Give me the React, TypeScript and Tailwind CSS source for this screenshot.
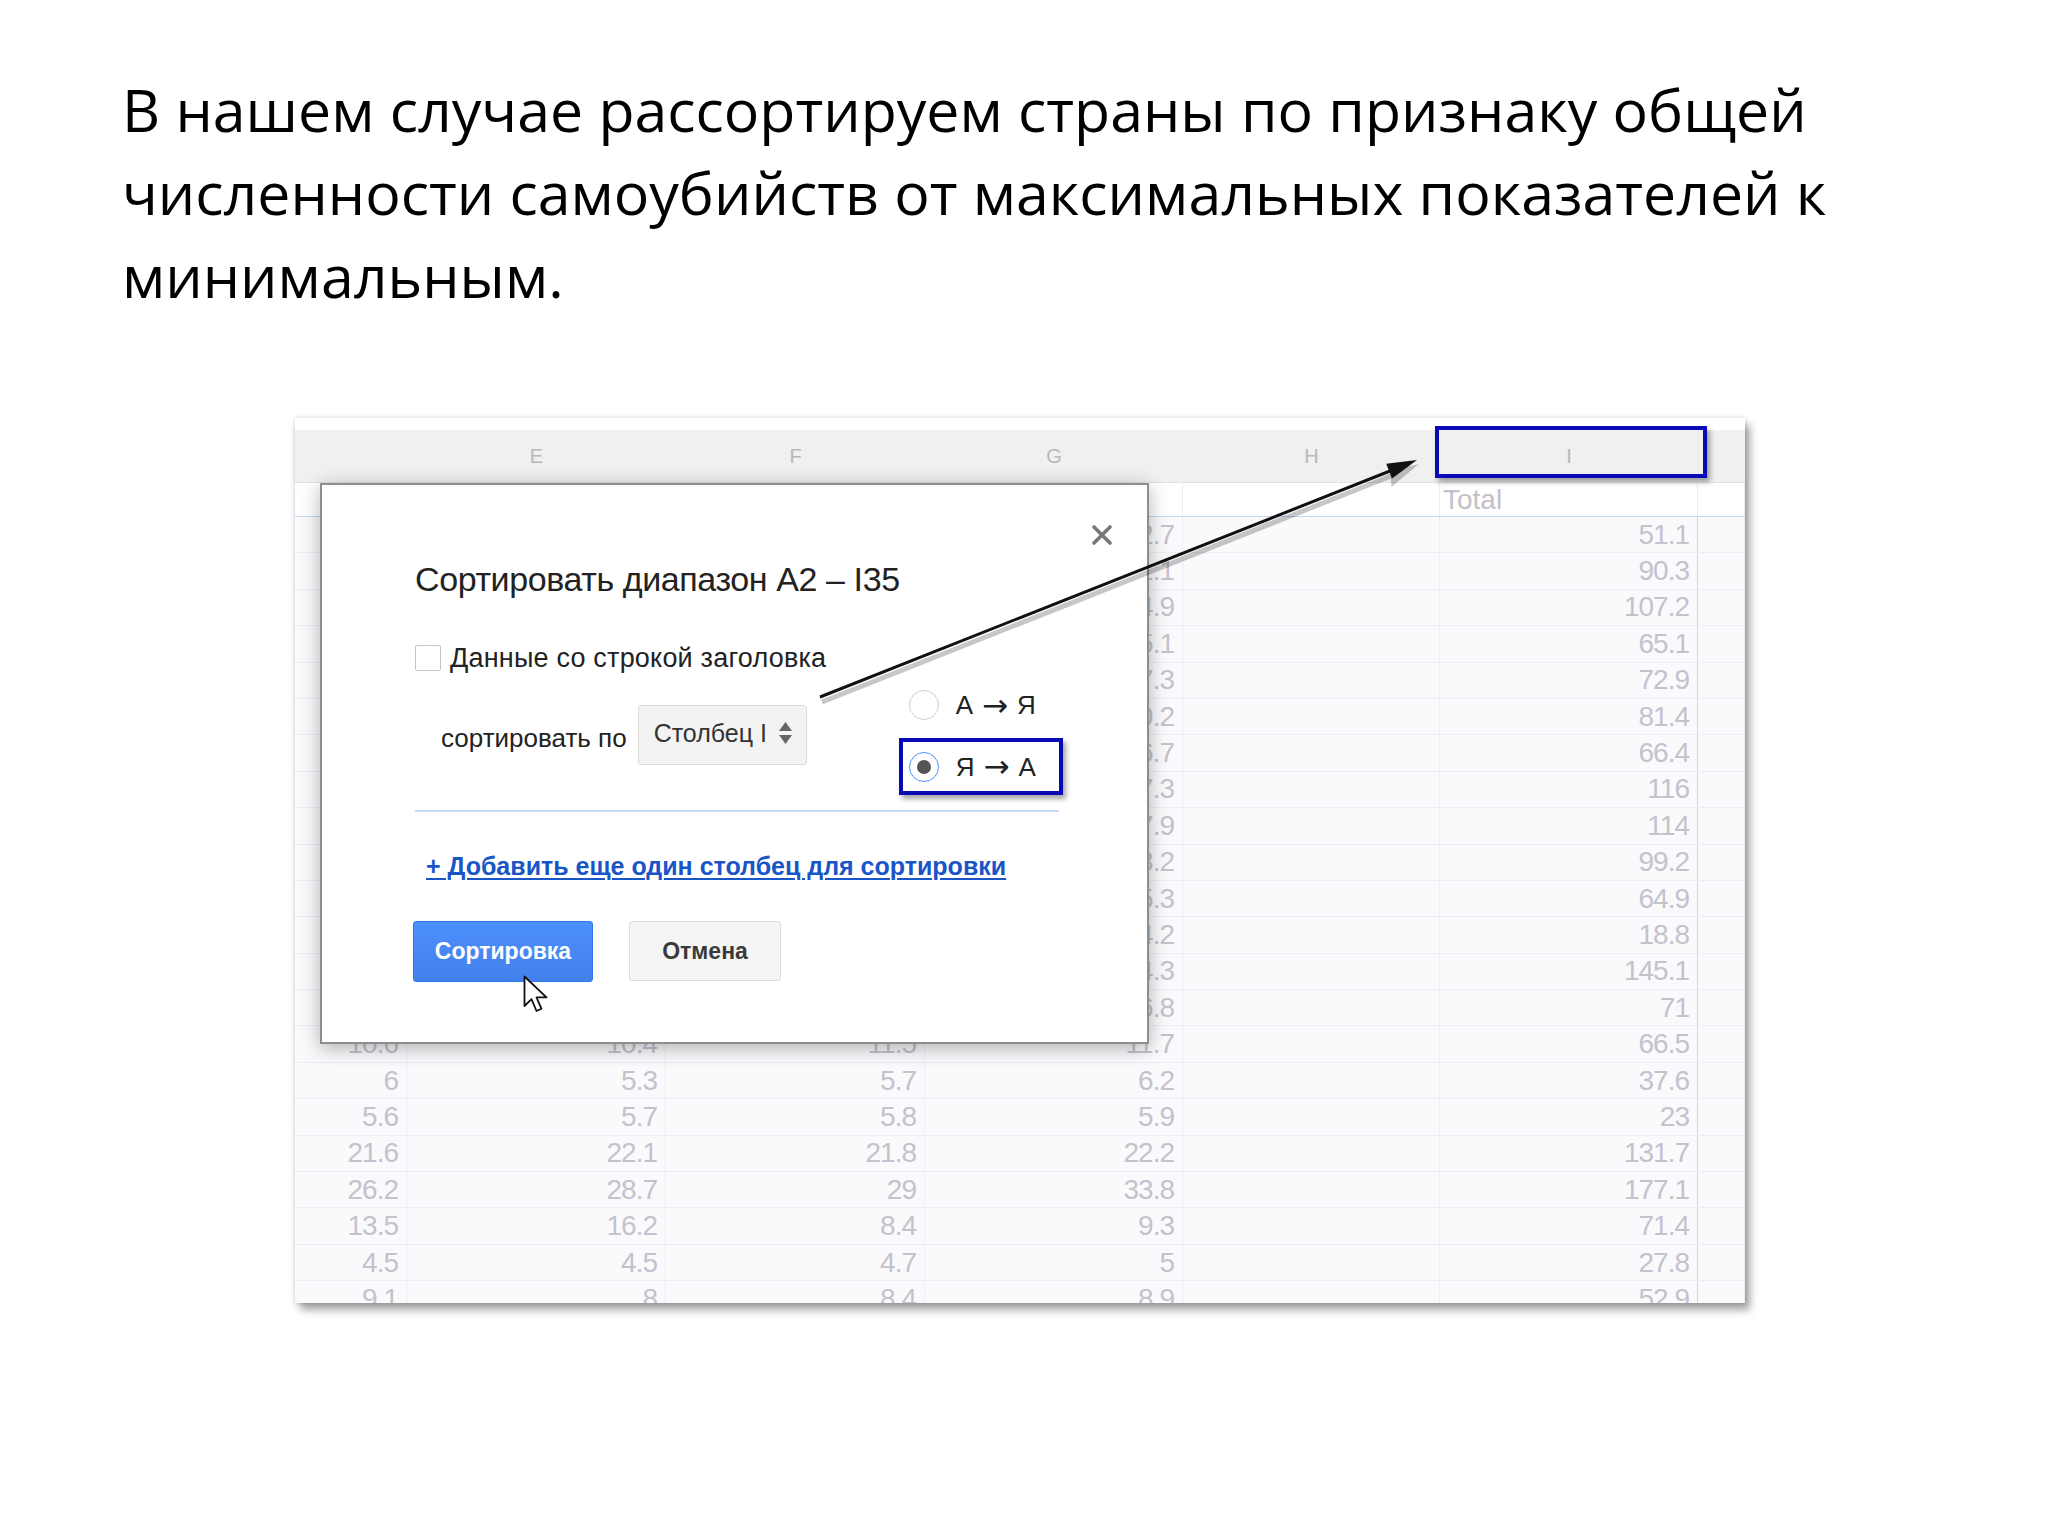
import React from "react";

const COL_W = ["w-[112px]", "w-[259px]", "w-[259px]", "w-[258px]", "w-[257px]", "w-[258px]", "w-[47px]"];
const HEAD = ["", "E", "F", "G", "H", "I", ""];

// D, E, F, G, I
const ROWS: string[][] = [
  ["8.1", "12.4", "13.2", "12.7", "51.1"],
  ["20.3", "22.5", "22.6", "21.1", "90.3"],
  ["25.1", "27.3", "27.5", "24.9", "107.2"],
  ["15.3", "17.1", "16.9", "15.1", "65.1"],
  ["16.9", "18.4", "19.9", "17.3", "72.9"],
  ["20.1", "21.4", "20.5", "19.2", "81.4"],
  ["15.5", "16.8", "17.2", "16.7", "66.4"],
  ["29.5", "29.4", "29.6", "27.3", "116"],
  ["28.3", "28.5", "28.7", "27.9", "114"],
  ["25.1", "25.3", "25.4", "23.2", "99.2"],
  ["16.2", "16.4", "16.9", "15.3", "64.9"],
  ["4.6", "5.1", "4.9", "4.2", "18.8"],
  ["36.2", "37.3", "37.3", "34.3", "145.1"],
  ["17.8", "18.1", "18.3", "16.8", "71"],
  ["10.6", "10.4", "11.5", "11.7", "66.5"],
  ["6", "5.3", "5.7", "6.2", "37.6"],
  ["5.6", "5.7", "5.8", "5.9", "23"],
  ["21.6", "22.1", "21.8", "22.2", "131.7"],
  ["26.2", "28.7", "29", "33.8", "177.1"],
  ["13.5", "16.2", "8.4", "9.3", "71.4"],
  ["4.5", "4.5", "4.7", "5", "27.8"],
  ["9.1", "8", "8.4", "8.9", "52.9"],
];

function Cell({ i, children, blue }: { i: number; children?: React.ReactNode; blue?: boolean }) {
  return (
    <div
      className={`${COL_W[i]} shrink-0 h-full flex items-center justify-end pr-[8px] border-r ${
        blue ? "border-[#c5d7f2]" : "border-[#ededf2]"
      }`}
    >
      {children}
    </div>
  );
}

function Radio({ checked }: { checked?: boolean }) {
  return checked ? (
    <div className="w-[30px] h-[30px] rounded-full border-[1.5px] border-[#4d90fe] bg-white flex items-center justify-center">
      <div className="w-[14px] h-[14px] rounded-full bg-[#555]" />
    </div>
  ) : (
    <div className="w-[30px] h-[30px] rounded-full border-[1.5px] border-[#cfcfcf] bg-white" />
  );
}

function Order({ from, to }: { from: string; to: string }) {
  return (
    <span className="flex items-center gap-[9px] text-[26px] leading-[30px]">
      <span>{from}</span>
      <span className="text-[31px] leading-none font-['DejaVu_Sans',sans-serif]">→</span>
      <span>{to}</span>
    </span>
  );
}

function SortDialog() {
  return (
    <div className="absolute left-[25px] top-[65px] w-[829px] h-[561px] bg-white border-2 border-[#8e8e8e] shadow-[0_4px_18px_rgba(0,0,0,0.3)] font-['Liberation_Sans',Arial,sans-serif] text-[#222]">
      {/* close */}
      <svg className="absolute left-[769px] top-[39px]" width="22" height="22" viewBox="0 0 22 22">
        <path d="M3 3l16 16M19 3L3 19" stroke="#777" strokeWidth="3.6" strokeLinecap="round" />
      </svg>

      <div className="pl-[93px] pt-[74px] flex flex-col">
        <div className="text-[34px] leading-[40px] tracking-[-0.4px]">Сортировать диапазон A2 – I35</div>

        <div className="mt-[44px] h-[30px] flex items-center gap-[9px]">
          <div className="w-[26px] h-[26px] border-[1.5px] border-[#c6c6c6] rounded-[2px] bg-white" />
          <span className="text-[27px] leading-[30px] tracking-[0.2px]">Данные со строкой заголовка</span>
        </div>

        <div className="mt-[17px] flex items-start">
          <div className="mt-[15px] ml-[26px] flex items-center gap-[11px]">
            <span className="text-[26px] leading-[30px] pt-[6px]">сортировать по</span>
            <div className="w-[169px] h-[60px] bg-[#f3f3f3] border border-[#dcdcdc] rounded-[3px] flex items-center gap-[11px] pl-[15px] pb-[4px]">
              <span className="text-[25px] leading-[30px] text-[#333]">Столбец I</span>
              <svg width="15" height="24" viewBox="0 0 15 24">
                <path d="M7.5 1L14 10H1z" fill="#666" />
                <path d="M7.5 23L14 14H1z" fill="#666" />
              </svg>
            </div>
          </div>

          <div className="ml-[92px] flex flex-col">
            <div className="ml-[10px] h-[30px] flex items-center gap-[17px]">
              <Radio />
              <Order from="А" to="Я" />
            </div>
            <div className="mt-[18px] w-[164px] h-[57px] border-4 border-[#0a0ab4] shadow-[3px_4px_5px_rgba(0,0,0,0.35)] flex items-center gap-[17px] pl-[6px]">
              <Radio checked />
              <Order from="Я" to="А" />
            </div>
          </div>
        </div>

        <div className="mt-[15px] w-[644px] h-[2px] bg-[#c8dbf8]" />

        <a className="mt-[40px] ml-[11px] text-[25px] leading-[29px] font-bold text-[#1a55c8] underline underline-offset-[3px] decoration-2">
          + Добавить еще один столбец для сортировки
        </a>

        <div className="mt-[40px] -ml-[2px] flex gap-[36px]">
          <div className="w-[180px] h-[61px] rounded-[3px] border border-[#3079ed] bg-gradient-to-b from-[#4d90fe] to-[#4280ea] flex items-center justify-center text-white text-[23px] font-bold">
            Сортировка
          </div>
          <div className="w-[152px] h-[60px] rounded-[3px] border border-[#dcdcdc] bg-[#f5f5f5] flex items-center justify-center text-[#3a3a3a] text-[23px] font-bold">
            Отмена
          </div>
        </div>
      </div>

      {/* mouse pointer */}
      <svg className="absolute left-[201px] top-[490px]" width="27" height="41" viewBox="0 0 27 41">
        <path d="M1.5 1.5V31l7-6.8 5 11.8 5-2.2-5-11.4h10z" fill="#fff" stroke="#111" strokeWidth="1.8" strokeLinejoin="round" />
      </svg>
    </div>
  );
}

function Sheet() {
  return (
    <div className="relative ml-[295px] mt-[101px] w-[1450px] h-[885px] bg-white overflow-hidden shadow-[0_0_5px_rgba(0,0,0,0.18),5px_7px_8px_rgba(0,0,0,0.35)] font-['Liberation_Sans',Arial,sans-serif]">
      <div className="h-[12px] bg-white" />
      {/* column header */}
      <div className="h-[53px] flex bg-[#f0f0f0] border-b border-[#e2e2e2]">
        {HEAD.map((h, i) => (
          <div key={i} className={`${COL_W[i]} shrink-0 flex items-center justify-center text-[20px] text-[#b8b8b8]`}>
            {h}
          </div>
        ))}
      </div>
      {/* header row of data */}
      <div className="h-[34px] flex bg-white border-b border-[#c5d7f2] text-[28px] text-[#c2c0ca]">
        <Cell i={0} />
        <Cell i={1} />
        <Cell i={2} />
        <Cell i={3} />
        <Cell i={4} />
        <div className="w-[258px] shrink-0 h-full flex items-center pl-[3px] border-r border-[#ededf2]">Total</div>
        <Cell i={6} />
      </div>
      {ROWS.map((r, k) => (
        <div key={k} className="h-[36.4px] flex bg-[#fafafd] border-b border-[#ececf1] text-[28px] tracking-[-1px] text-[#c4c2cc]">
          <Cell i={0}>{r[0]}</Cell>
          <Cell i={1}>{r[1]}</Cell>
          <Cell i={2}>{r[2]}</Cell>
          <Cell i={3}>{r[3]}</Cell>
          <Cell i={4} />
          <Cell i={5} blue>
            {r[4]}
          </Cell>
          <Cell i={6} />
        </div>
      ))}

      <SortDialog />

      {/* highlight on column I header */}
      <div className="absolute left-[1140px] top-[8px] w-[272px] h-[52px] border-4 border-[#0a0ab4] shadow-[3px_4px_5px_rgba(0,0,0,0.35)]" />

      {/* pointer arrow */}
      <svg className="absolute left-0 top-0" width="1450" height="885" viewBox="0 0 1450 885">
        <line x1="527" y1="284" x2="1096" y2="58" stroke="rgba(0,0,0,0.22)" strokeWidth="5" />
        <path d="M1124 46l-27.5 23-1.5-16.5z" fill="rgba(0,0,0,0.22)" />
        <line x1="525" y1="279" x2="1095" y2="53" stroke="#111" strokeWidth="3" />
        <path d="M1122 42L1097 60.5 1091.2 45.7z" fill="#111" />
      </svg>
    </div>
  );
}

export default function App() {
  return (
    <div className="w-[2048px] h-[1536px] bg-white flex flex-col">
      <p className="pt-[68px] pl-[122px] text-[59px] leading-[83px] text-black font-['Open_Sans',sans-serif]">
        В нашем случае рассортируем страны по признаку общей
        <br />
        численности самоубийств от максимальных показателей к
        <br />
        минимальным.
      </p>
      <Sheet />
    </div>
  );
}
